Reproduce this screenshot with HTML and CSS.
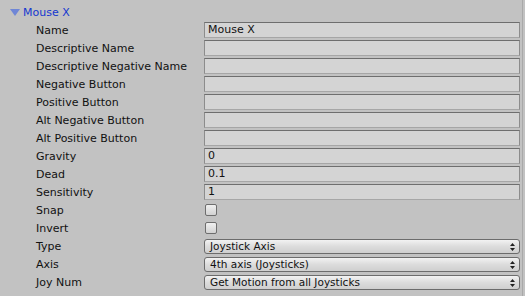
FILE: index.html
```html
<!DOCTYPE html>
<html lang="en">
<head>
  <meta charset="UTF-8">
  <title>Input Axis - Mouse X</title>
  <link rel="stylesheet" href="styles.css">
</head>
<body>
  <div class="inspector">
    <div class="foldout">
      <span class="arrow"></span>
      <span class="foldout-title">Mouse X</span>
    </div>

    <div class="props">
      <div class="row"><label>Name</label><div class="field">Mouse X</div></div>
      <div class="row"><label>Descriptive Name</label><div class="field"></div></div>
      <div class="row"><label>Descriptive Negative Name</label><div class="field"></div></div>
      <div class="row"><label>Negative Button</label><div class="field"></div></div>
      <div class="row"><label>Positive Button</label><div class="field"></div></div>
      <div class="row"><label>Alt Negative Button</label><div class="field"></div></div>
      <div class="row"><label>Alt Positive Button</label><div class="field"></div></div>
      <div class="row"><label>Gravity</label><div class="field">0</div></div>
      <div class="row"><label>Dead</label><div class="field">0.1</div></div>
      <div class="row"><label>Sensitivity</label><div class="field">1</div></div>
      <div class="row"><label>Snap</label><div class="cell"><span class="check"></span></div></div>
      <div class="row"><label>Invert</label><div class="cell"><span class="check"></span></div></div>
      <div class="row"><label>Type</label><div class="popup">Joystick Axis<svg class="updown" width="5" height="8" viewBox="0 0 5 8"><path d="M2.5 0L5 3H0z M0 5h5L2.5 8z" fill="#222"/></svg></div></div>
      <div class="row"><label>Axis</label><div class="popup">4th axis (Joysticks)<svg class="updown" width="5" height="8" viewBox="0 0 5 8"><path d="M2.5 0L5 3H0z M0 5h5L2.5 8z" fill="#222"/></svg></div></div>
      <div class="row"><label>Joy Num</label><div class="popup">Get Motion from all Joysticks<svg class="updown" width="5" height="8" viewBox="0 0 5 8"><path d="M2.5 0L5 3H0z M0 5h5L2.5 8z" fill="#222"/></svg></div></div>
    </div>
  </div>
</body>
</html>
```
FILE: styles.css
```css
body {
  margin: 0;
  background-color: #c2c2c2;
  font-family: 'DejaVu Sans', sans-serif;
  font-size: 11px;
  color: #111;
}

.inspector {
  height: 296px;
  border-right: 1px solid #a9a9a9;
  margin-right: 2px;
  padding-top: 3px;
  box-sizing: border-box;
}

.foldout {
  height: 18px;
  display: flex;
  align-items: center;
  padding-left: 10px;
}

.arrow {
  width: 0;
  height: 0;
  border-left: 5px solid transparent;
  border-right: 5px solid transparent;
  border-top: 7px solid #6f86d6;
  margin-right: 3px;
}

.foldout-title {
  color: #1437d0;
}

.props {
  padding-left: 36px;
  padding-right: 2px;
}

.row {
  display: grid;
  grid-template-columns: 168px 1fr;
  height: 18px;
  align-items: center;
}

.field {
  height: 16px;
  box-sizing: border-box;
  background-color: #d4d4d4;
  border: 1px solid #8c8c8c;
  border-top-color: #6e6e6e;
  border-bottom-color: #a6a6a6;
  padding-left: 3px;
  line-height: 14px;
}

.cell {
  display: flex;
  align-items: center;
  padding-left: 1px;
}

.check {
  width: 12px;
  height: 12px;
  box-sizing: border-box;
  border: 1px solid #6e6e6e;
  border-radius: 2px;
  background: linear-gradient(#f0f0f0, #d2d2d2);
}

.popup {
  height: 15px;
  margin-top: 1px;
  box-sizing: border-box;
  border: 1px solid #6c6c6c;
  border-radius: 3px;
  background: linear-gradient(#f2f2f2, #dcdcdc 50%, #cfcfcf);
  padding-left: 5px;
  padding-right: 4px;
  line-height: 13px;
  font-size: 10.5px;
  display: flex;
  justify-content: space-between;
  align-items: center;
}

.updown {
  flex: none;
}
```
